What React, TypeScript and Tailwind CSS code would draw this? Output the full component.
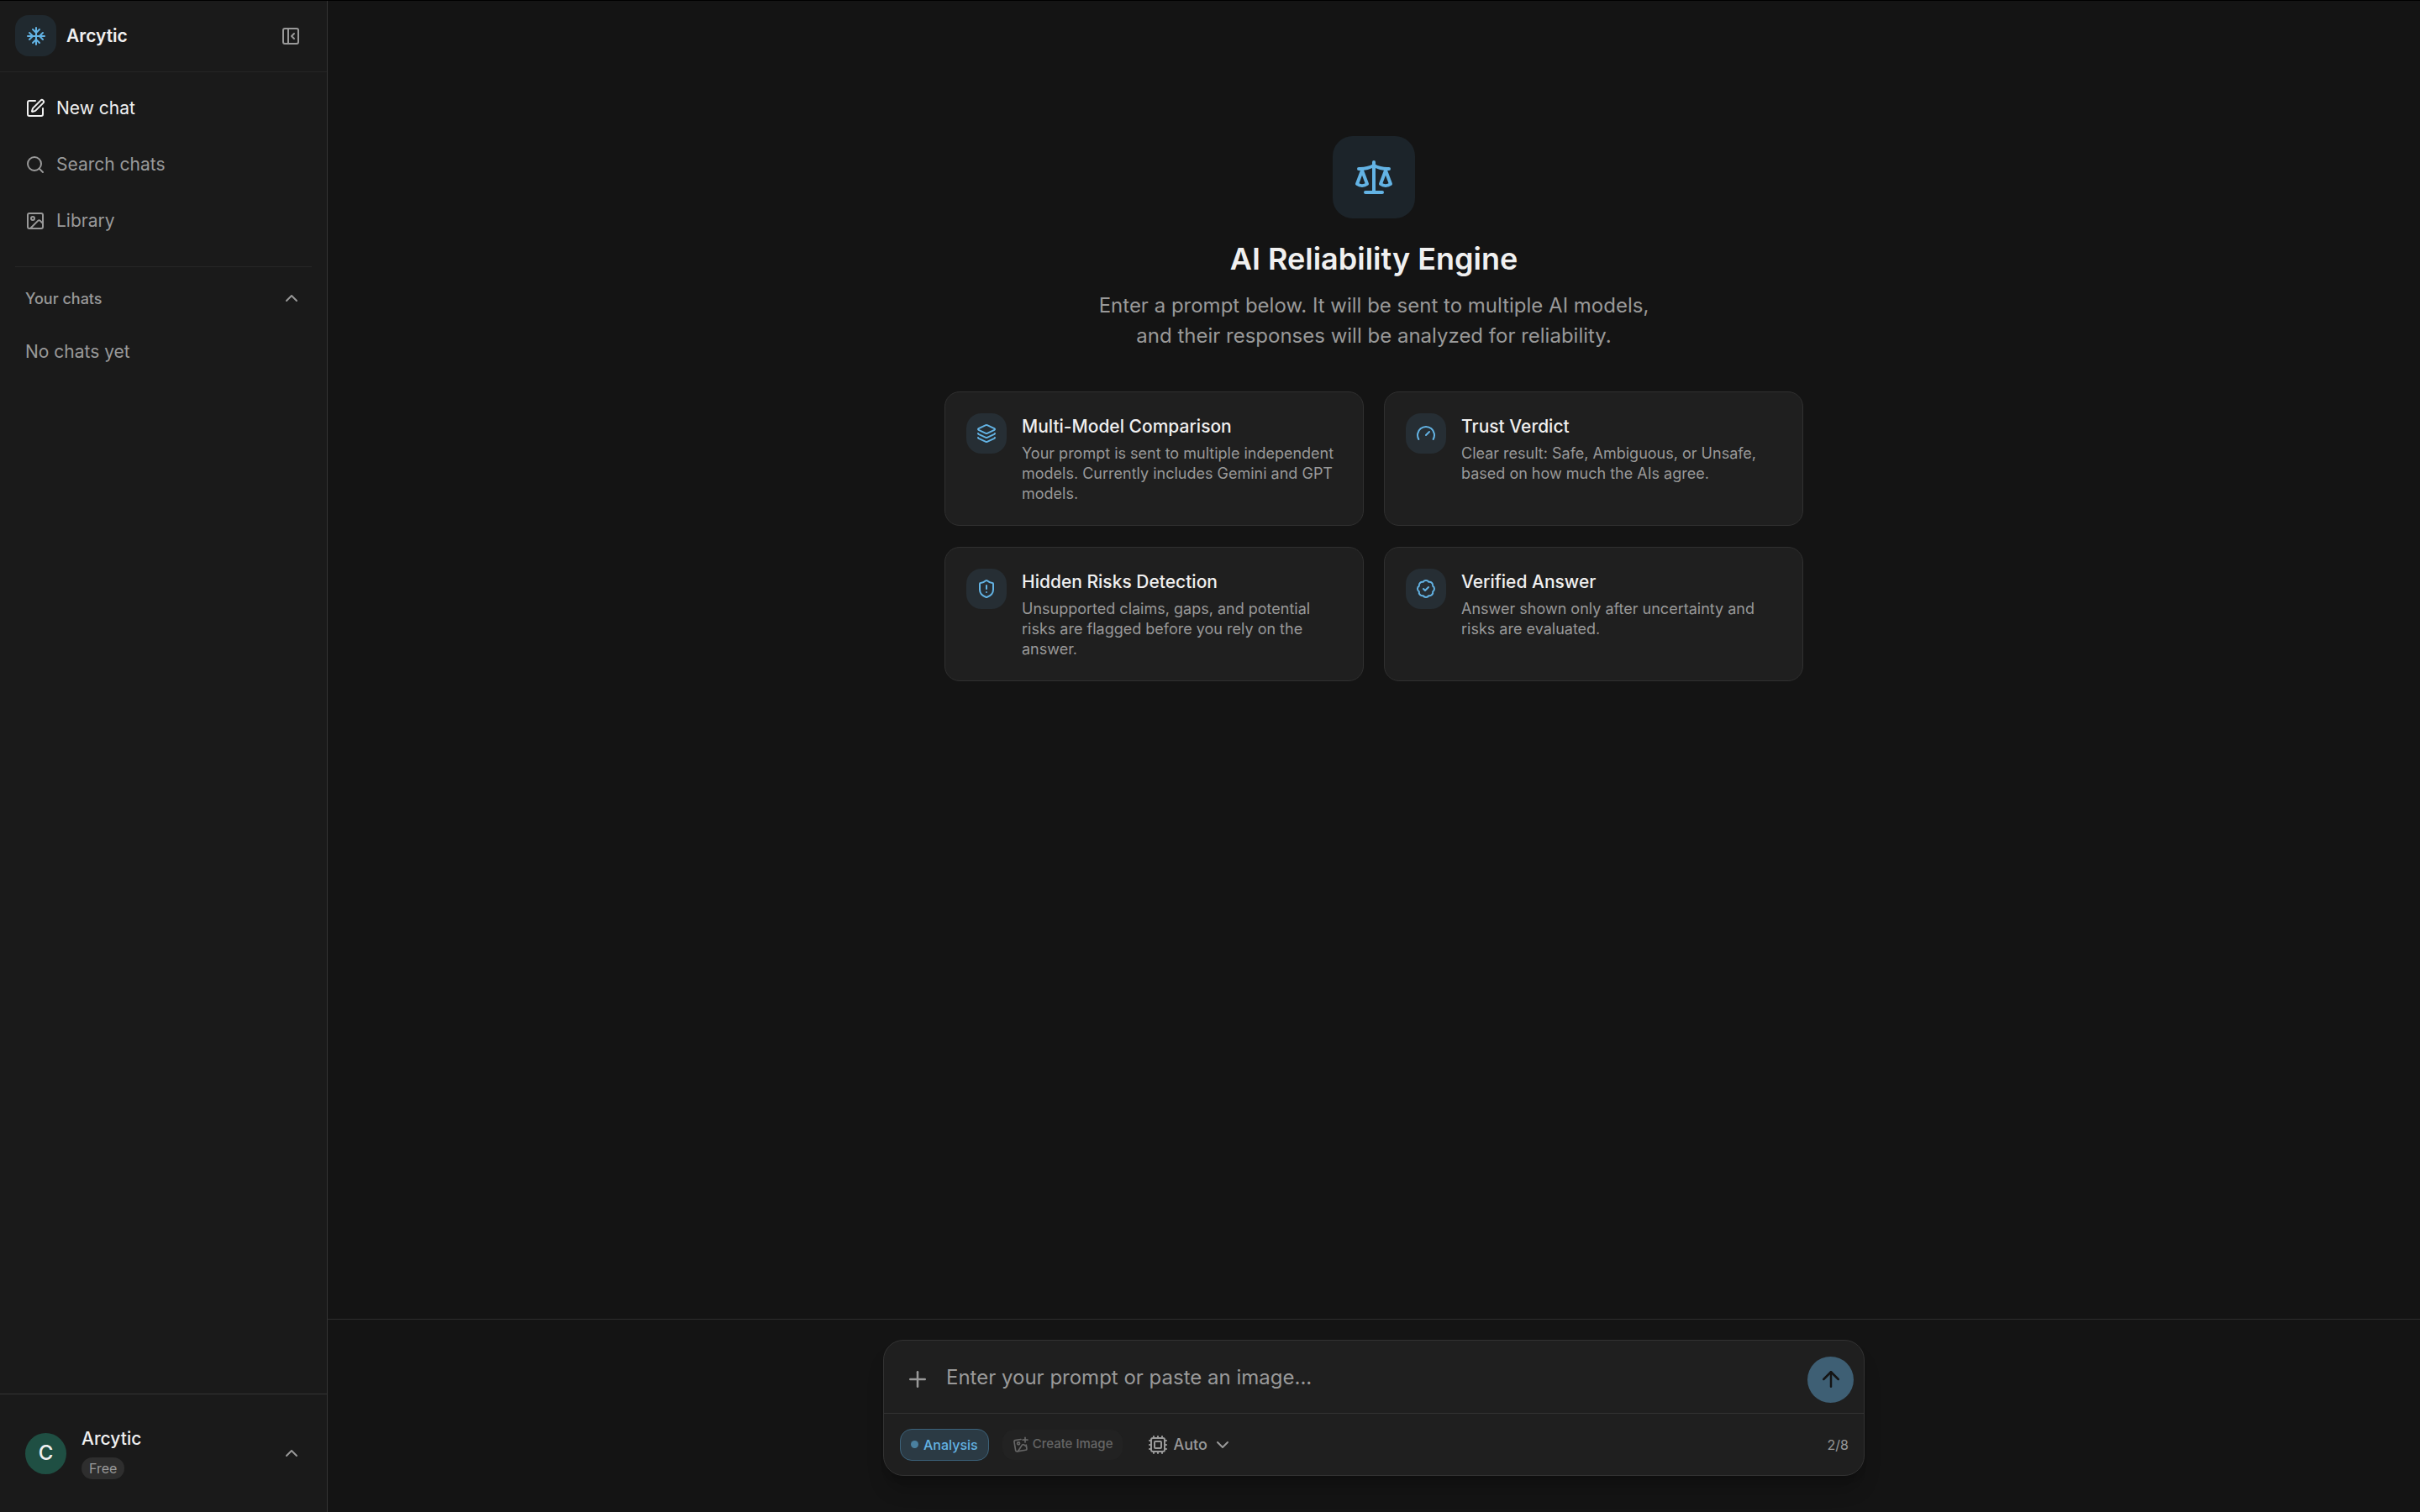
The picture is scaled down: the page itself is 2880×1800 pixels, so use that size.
import { useState } from 'react';
import {
  ArrowUp,
  BadgeCheck,
  ChevronDown,
  ChevronUp,
  Cpu,
  Gauge,
  Image,
  Layers,
  PanelLeftClose,
  Plus,
  Scale,
  Search,
  ShieldAlert,
  SquarePen,
} from 'lucide-react';

const features = [
  {
    icon: Layers,
    title: 'Multi-Model Comparison',
    text: 'Your prompt is sent to multiple independent models. Currently includes Gemini and GPT models.',
  },
  {
    icon: Gauge,
    title: 'Trust Verdict',
    text: 'Clear result: Safe, Ambiguous, or Unsafe, based on how much the AIs agree.',
  },
  {
    icon: ShieldAlert,
    title: 'Hidden Risks Detection',
    text: 'Unsupported claims, gaps, and potential risks are flagged before you rely on the answer.',
  },
  {
    icon: BadgeCheck,
    title: 'Verified Answer',
    text: 'Answer shown only after uncertainty and risks are evaluated.',
  },
];

const navItems = [
  { icon: SquarePen, label: 'New chat', active: true },
  { icon: Search, label: 'Search chats', active: false },
  { icon: Image, label: 'Library', active: false },
];

// four-armed flake used as the brand mark
function SnowflakeLogo() {
  return (
    <svg viewBox="0 0 24 24" fill="none" stroke="currentColor" strokeWidth="2" strokeLinecap="round" strokeLinejoin="round" className="size-6" aria-hidden="true">
      <path d="M2 12h20M12 2v20" />
      <path d="m20 16-4-4 4-4M4 8l4 4-4 4M16 4l-4 4-4-4M8 20l4-4 4 4" />
    </svg>
  );
}

function CreateImageIcon() {
  return (
    <svg viewBox="0 0 24 24" fill="none" stroke="currentColor" strokeWidth="2" strokeLinecap="round" strokeLinejoin="round" className="size-5" aria-hidden="true">
      <path d="M12 4.2 4 5.6a2 2 0 0 0-1.6 2.3l2 12a2 2 0 0 0 2.3 1.6l12-2a2 2 0 0 0 1.6-2.3l-.9-5" />
      <circle cx="8.5" cy="10" r="1.8" />
      <path d="m8 21 5.5-8.5a2 2 0 0 1 2.8-.5L20 14.5" />
      <path d="M18 1.5v7M14.5 5h7" />
    </svg>
  );
}

function Sidebar() {
  return (
    <aside className="flex w-[390px] shrink-0 flex-col border-r border-[#333333] bg-[#1a1a1a]">
      <div className="flex items-center justify-between border-b border-[#262626] pt-[17px] pr-[19px] pb-[18px] pl-[18px]">
        <div className="flex items-center gap-3">
          <div className="flex size-[49px] items-center justify-center rounded-2xl bg-[#20292f] text-[#63b3e4]">
            <SnowflakeLogo />
          </div>
          <span className="text-[21px] font-semibold">Arcytic</span>
        </div>
        <button type="button" aria-label="Close sidebar" className="flex size-12 items-center justify-center text-[#999999]">
          <PanelLeftClose className="size-6" />
        </button>
      </div>

      <nav className="flex flex-col gap-[6px] px-[18px] pt-3 pb-6">
        {navItems.map(({ icon: Icon, label, active }) => (
          <button
            key={label}
            type="button"
            className={`flex h-[61px] items-center gap-[13px] px-3 text-[21px] ${active ? 'text-[#f0f0f0]' : 'text-[#999999]'}`}
          >
            <Icon className="size-6" />
            {label}
          </button>
        ))}
      </nav>

      <div className="mx-[18px] flex flex-col border-t border-[#262626] px-3 pt-[23px] text-[#999999]">
        <button type="button" className="flex h-7 items-center justify-between text-[18px] font-medium">
          Your chats
          <ChevronUp className="size-6" />
        </button>
        <p className="pt-[34px] text-[21px] leading-8">No chats yet</p>
      </div>

      <button type="button" className="mt-auto flex h-[141px] items-center gap-[18px] border-t border-[#333333] px-[30px] text-left">
        <span className="flex size-[49px] items-center justify-center rounded-full bg-[#1f4f43] text-[24px] font-medium">C</span>
        <span className="flex flex-1 flex-col items-start gap-2">
          <span className="text-[21px] leading-7 font-medium">Arcytic</span>
          <span className="rounded-full bg-[#2e2e2e] px-[9px] text-[16px] leading-[26px] text-[#999999]">Free</span>
        </span>
        <ChevronUp className="size-6 text-[#999999]" />
      </button>
    </aside>
  );
}

function FeatureGrid() {
  return (
    <div className="grid w-full max-w-[1022px] grid-cols-2 gap-x-6 gap-y-[25px]">
      {features.map(({ icon: Icon, title, text }) => (
        <article key={title} className="flex items-start gap-[18px] rounded-[18px] border border-[#303030] bg-[#1f1f1f] p-[25px]">
          <div className="flex size-12 shrink-0 items-center justify-center rounded-[18px] bg-[#262e34] text-[#63b3e4]">
            <Icon className="size-6" />
          </div>
          <div className="text-[18px] leading-6">
            <h2 className="pb-1 text-[21px] leading-8 font-medium">{title}</h2>
            <p className="text-[#999999]">{text}</p>
          </div>
        </article>
      ))}
    </div>
  );
}

function Composer() {
  const [prompt, setPrompt] = useState('');

  return (
    <form
      onSubmit={(e) => e.preventDefault()}
      className="w-full max-w-[1168px] rounded-[24px] border border-[#333333] bg-[#1f1f1f] shadow-xl shadow-black/20"
    >
      <div className="flex h-[86px] items-center gap-3 pt-[6px] pr-3 pl-[18px]">
        <button type="button" aria-label="Attach" className="flex size-11 items-center justify-center text-[#999999]">
          <Plus className="size-[30px]" />
        </button>
        <input
          type="text"
          aria-label="Prompt"
          value={prompt}
          onChange={(e) => setPrompt(e.target.value)}
          placeholder="Enter your prompt or paste an image..."
          className="min-w-0 flex-1 bg-transparent pb-1 text-[24px] outline-none placeholder:text-[#999999]"
        />
        <button type="submit" aria-label="Send" className="flex size-[55px] items-center justify-center rounded-full bg-[#3e5f74] text-[#141414]">
          <ArrowUp className="size-[30px]" />
        </button>
      </div>
      <div className="flex h-[74px] items-center border-t border-[#333333] pr-[18px] pl-[19px]">
        <button type="button" className="flex h-[38px] items-center gap-[6px] rounded-[14px] border border-[#3c627a] bg-[#2b3a44] px-3 text-[16px] font-medium text-[#63b3e4]">
          <span className="size-[9px] rounded-full bg-[#4a809f]" />
          Analysis
        </button>
        <button type="button" className="ml-4 flex h-9 items-center gap-1 rounded-[14px] bg-[#222222] px-3 text-[15px] font-medium text-[#666666]">
          <CreateImageIcon />
          Create Image
        </button>
        <button type="button" className="ml-6 flex items-center gap-[6px] px-[6px] text-[18px] font-medium text-[#999999]">
          <Cpu className="size-6" />
          Auto
          <ChevronDown className="size-6" />
        </button>
        <span className="ml-auto text-[16px] text-[#999999]">2/8</span>
      </div>
    </form>
  );
}

export default function App() {
  return (
    <div className="flex min-h-screen border-t border-black bg-[#141414] font-['Inter',sans-serif] text-[#f0f0f0]">
      <Sidebar />
      <main className="flex min-w-0 flex-1 flex-col">
        <section className="flex flex-1 flex-col items-center px-6 pt-[161px]">
          <div className="flex size-[98px] items-center justify-center rounded-[24px] bg-[#1c242a] text-[#63b3e4]">
            <Scale className="size-12" />
          </div>
          <h1 className="pt-6 text-[36px] leading-[48px] font-semibold">AI Reliability Engine</h1>
          <p className="max-w-[682px] pt-[14px] pb-12 text-center text-[24px] leading-9 text-[#999999]">
            Enter a prompt below. It will be sent to multiple AI models, and their responses will be analyzed for reliability.
          </p>
          <FeatureGrid />
        </section>
        <footer className="flex justify-center border-t border-[#2e2e2e] px-6 pt-6 pb-[43px]">
          <Composer />
        </footer>
      </main>
    </div>
  );
}
